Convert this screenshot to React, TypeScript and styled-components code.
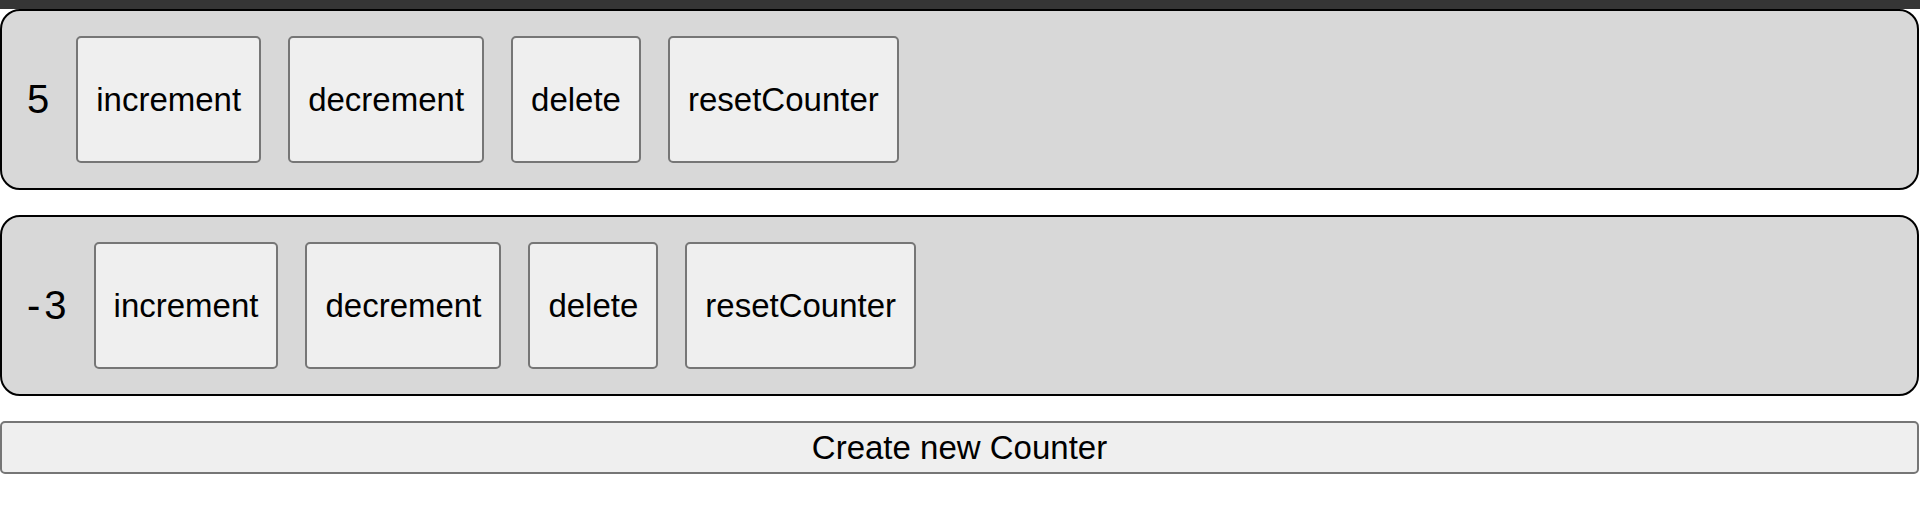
import React, { useState } from "react";
import styled, { createGlobalStyle } from "styled-components";

const Global = createGlobalStyle`
  * { box-sizing: border-box; }
  body {
    margin: 0;
    background: #fff;
    font-family: "Liberation Sans", Arial, sans-serif;
  }
`;

type CounterItem = { id: number; value: number };

const App = () => {
  const [counters, setCounters] = useState<CounterItem[]>([
    { id: 1, value: 5 },
    { id: 2, value: -3 },
  ]);
  const [nextId, setNextId] = useState(3);

  const update = (id: number, fn: (v: number) => number) => {
    setCounters(counters.map((c) => (c.id === id ? { ...c, value: fn(c.value) } : c)));
  };
  const remove = (id: number) => {
    setCounters(counters.filter((c) => c.id !== id));
  };
  const create = () => {
    setCounters([...counters, { id: nextId, value: 0 }]);
    setNextId(nextId + 1);
  };

  return (
    <Page>
      <Global />
      <TopBar />
      <List>
        {counters.map((c) => (
          <Card key={c.id}>
            <Count>{c.value}</Count>
            <Action onClick={() => update(c.id, (v) => v + 1)}>increment</Action>
            <Action onClick={() => update(c.id, (v) => v - 1)}>decrement</Action>
            <Action onClick={() => remove(c.id)}>delete</Action>
            <Action onClick={() => update(c.id, () => 0)}>resetCounter</Action>
          </Card>
        ))}
        <Create onClick={create}>Create new Counter</Create>
      </List>
    </Page>
  );
};

export default App;

const Page = styled.div`
  width: 100%;
`;

const TopBar = styled.div`
  height: 9px;
  background-color: #353535;
`;

const List = styled.div`
  display: flex;
  flex-direction: column;
  gap: 25px;
  padding-right: 1px;
`;

const Card = styled.div`
  display: flex;
  align-items: center;
  gap: 27px;
  padding: 25px;
  background-color: #d8d8d8;
  border: 2px solid #000;
  border-radius: 20px;
`;

const Count = styled.span`
  font-size: 40px;
  letter-spacing: 4px;
  margin-right: -4px;
  color: #000;
`;

const Action = styled.button`
  font-family: "Liberation Sans", Arial, sans-serif;
  font-size: 33px;
  line-height: 38px;
  color: #000;
  padding: 43px 18px 42px;
  background-color: #efefef;
  border: 2px solid #767676;
  border-radius: 5px;
  cursor: pointer;
`;

const Create = styled.button`
  width: 100%;
  font-family: "Liberation Sans", Arial, sans-serif;
  font-size: 33px;
  line-height: 38px;
  color: #000;
  padding: 6px 0 5px;
  background-color: #efefef;
  border: 2px solid #767676;
  border-radius: 5px;
  cursor: pointer;
`;
